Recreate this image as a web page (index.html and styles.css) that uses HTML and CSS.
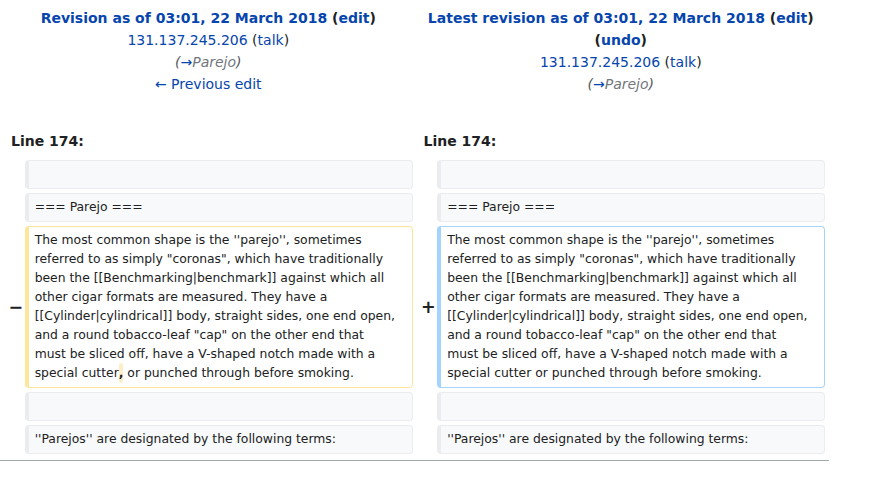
FILE: index.html
```html
<!DOCTYPE html>
<html lang="en">
<head>
<meta charset="utf-8">
<title>Diff</title>
<link rel="stylesheet" href="styles.css">
</head>
<body>
<table class="diff">
  <colgroup>
    <col class="col-marker">
    <col class="col-content">
    <col class="col-marker">
    <col class="col-content">
  </colgroup>
  <tr class="diff-title">
    <td colspan="2" class="diff-otitle">
      <div class="title-line"><strong><a href="#">Revision as of 03:01, 22 March 2018</a> <span class="paren">(<a href="#">edit</a>)</span></strong></div>
      <div><a href="#">131.137.245.206</a> <span class="paren">(<a href="#">talk</a>)</span></div>
      <div class="comment">(<a href="#">→</a><span class="autocomment">Parejo</span>)</div>
      <div><a href="#">← Previous edit</a></div>
    </td>
    <td colspan="2" class="diff-ntitle">
      <div class="title-line"><strong><a href="#">Latest revision as of 03:01, 22 March 2018</a> <span class="paren">(<a href="#">edit</a>)</span> <span class="paren">(<a href="#">undo</a>)</span></strong></div>
      <div><a href="#">131.137.245.206</a> <span class="paren">(<a href="#">talk</a>)</span></div>
      <div class="comment">(<a href="#">→</a><span class="autocomment">Parejo</span>)</div>
    </td>
  </tr>
  <tr>
    <td colspan="2" class="diff-lineno">Line 174:</td>
    <td colspan="2" class="diff-lineno">Line 174:</td>
  </tr>
  <tr>
    <td class="diff-marker"></td>
    <td class="diff-context"><br></td>
    <td class="diff-marker"></td>
    <td class="diff-context"><br></td>
  </tr>
  <tr>
    <td class="diff-marker"></td>
    <td class="diff-context">=== Parejo ===</td>
    <td class="diff-marker"></td>
    <td class="diff-context">=== Parejo ===</td>
  </tr>
  <tr>
    <td class="diff-marker">−</td>
    <td class="diff-deletedline">The most common shape is the ''parejo'', sometimes referred to as simply "coronas", which have traditionally been the [[Benchmarking|benchmark]] against which all other cigar formats are measured. They have a [[Cylinder|cylindrical]] body, straight sides, one end open, and a round tobacco-leaf "cap" on the other end that<br>must be sliced off, have a V-shaped notch made with a special cutter<span class="diffchange">,</span> or punched through before smoking.</td>
    <td class="diff-marker">+</td>
    <td class="diff-addedline">The most common shape is the ''parejo'', sometimes referred to as simply "coronas", which have traditionally been the [[Benchmarking|benchmark]] against which all other cigar formats are measured. They have a [[Cylinder|cylindrical]] body, straight sides, one end open, and a round tobacco-leaf "cap" on the other end that<br>must be sliced off, have a V-shaped notch made with a special cutter or punched through before smoking.</td>
  </tr>
  <tr>
    <td class="diff-marker"></td>
    <td class="diff-context"><br></td>
    <td class="diff-marker"></td>
    <td class="diff-context"><br></td>
  </tr>
  <tr>
    <td class="diff-marker"></td>
    <td class="diff-context">''Parejos'' are designated by the following terms:</td>
    <td class="diff-marker"></td>
    <td class="diff-context">''Parejos'' are designated by the following terms:</td>
  </tr>
</table>
<div class="diff-rule"></div>
</body>
</html>
```

FILE: styles.css
```css
html, body {
  margin: 0;
  padding: 0;
  background: #ffffff;
}

body {
  font-family: "DejaVu Sans", sans-serif;
  font-size: 14px;
  color: #202122;
}

a {
  color: #0645ad;
  text-decoration: none;
}

.diff {
  width: 829px;
  border: none;
  border-spacing: 4px;
  table-layout: fixed;
  margin: 0;
}

.col-marker {
  width: 16.5px;
}

.col-content {
  width: 388px;
}

.diff td {
  padding: 0.33em 0.5em;
}

.diff-title td {
  text-align: center;
  line-height: 22px;
  padding: 3px 0 26px;
  vertical-align: top;
}

.title-line strong {
  font-weight: bold;
}

.paren {
  color: #202122;
}

.comment {
  font-style: italic;
  color: #54595d;
}

.autocomment {
  color: #72777d;
}

.diff td.diff-lineno {
  font-weight: bold;
  line-height: 22px;
  padding: 4.6px 7px;
}

.diff td.diff-marker {
  text-align: right;
  font-weight: bold;
  font-size: 1.25em;
  line-height: 1.2;
  padding: 0.25em;
  vertical-align: middle;
}

.diff td.diff-context,
.diff td.diff-addedline,
.diff td.diff-deletedline {
  font-size: 12.36px;
  line-height: 19px;
  vertical-align: top;
  white-space: pre-wrap;
  word-wrap: break-word;
  border-style: solid;
  border-width: 1px 1px 1px 4px;
  border-radius: 0.33em;
  padding: 4px 6.16px;
}

.diff td.diff-context {
  background: #f8f9fa;
  border-color: #eaecf0;
  color: #202122;
}

.diff td.diff-deletedline {
  background: #ffffff;
  border-color: #ffe49c;
}

.diff td.diff-addedline {
  background: #ffffff;
  border-color: #a3d3ff;
}

.diffchange {
  font-weight: bold;
  background: #feeec8;
  border-radius: 0.33em;
  padding: 0.25em 0;
}

.diff-rule {
  width: 829px;
  margin-top: 2px;
  border-top: 1px solid #a2a9b1;
}
```
